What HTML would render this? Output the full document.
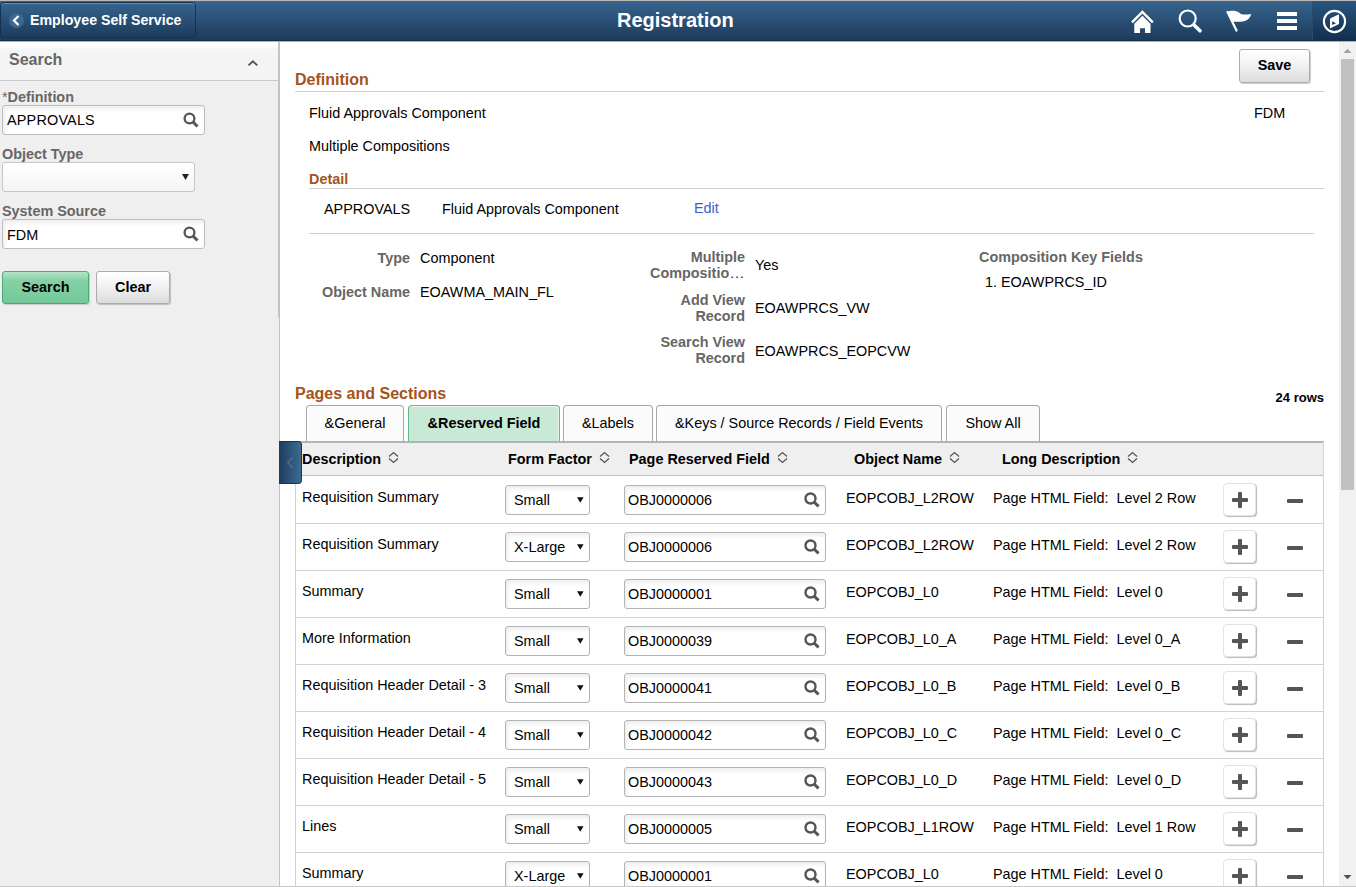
<!DOCTYPE html>
<html><head><meta charset="utf-8">
<style>
*{box-sizing:border-box;margin:0;padding:0}
html,body{width:1356px;height:887px;overflow:hidden;background:#fff;font-family:"Liberation Sans",sans-serif;color:#000}
.a{position:absolute;white-space:pre}
#topline{position:absolute;left:0;top:0;width:1356px;height:1px;background:#bcbab8}
#hdr{position:absolute;left:0;top:1px;width:1356px;height:40px;background:linear-gradient(#37658f,#1c3a5a)}
#hdrline{position:absolute;left:0;top:41px;width:1356px;height:1px;background:#8fb8e6}
#back{position:absolute;left:0;top:2px;width:196px;height:36px;border:1px solid #14324f;border-radius:4px;background:linear-gradient(#36648e,#1d3c5c);box-shadow:inset 0 1px 0 #5f8fbd}
#backc{position:absolute;left:9px;top:13px;width:15px;height:15px;border-radius:50%;background:#3b6992}
.ttl{color:#fff;font-weight:bold}
#left{position:absolute;left:0;top:42px;width:279px;height:844px;background:#efefef}
#lborder{position:absolute;left:279px;top:42px;width:1px;height:844px;background:#c3c3c3}
#lborder2{position:absolute;left:278px;top:42px;width:1px;height:276px;background:#c3c3c3}
#shdr{position:absolute;left:0;top:42px;width:278px;height:39px;background:linear-gradient(#fff 0,#fff 3px,#f4f4f4 8px,#f4f4f4);border-bottom:1px solid #c8c8c8}
.lbl{color:#666;font-weight:bold;font-size:14.4px}
.inp{position:absolute;background:#fff;border:1px solid #bdbdbd;border-radius:3px;box-shadow:inset 2px 3px 4px rgba(0,0,0,.07)}
.sel{position:absolute;background:linear-gradient(#fff,#f4f4f4);border:1px solid #c6c6c6;border-radius:3px}
#bottomline{position:absolute;left:0;top:886px;width:1356px;height:1px;background:#c8c8c8}
#sb{position:absolute;left:1339px;top:42px;width:17px;height:844px;background:#f1f1f1}
#thumb{position:absolute;left:1341px;top:59px;width:13px;height:431px;background:#c1c1c1}
.brown{color:#a4531b;font-weight:bold}
.r{text-align:right}
.t{font-size:14.4px;color:#000}
.btn{position:absolute;border-radius:3px;font-weight:bold;font-size:14.4px;text-align:center;line-height:31px;color:#000}
.green{background:linear-gradient(#b4e3c8 0,#84d0a4 9px,#74c99a 100%);border:1px solid #4aa872;box-shadow:1px 1px 1px rgba(0,0,0,.15)}
.gray{background:linear-gradient(#fff 0,#f4f4f4 40%,#dcdcdc 100%);border:1px solid #ababab;box-shadow:1px 1px 1px rgba(0,0,0,.2)}
.tab{position:absolute;top:405px;height:36px;border:1px solid #a6a6a6;border-bottom:none;border-radius:4px 4px 0 0;background:#fbfbfb;box-shadow:inset 1px 1px 0 #fff;text-align:center;font-size:14.4px;line-height:34px;white-space:pre}
.tab.act{background:#c8e9d6;border-color:#5fb988;font-weight:bold;box-shadow:inset -1px 1px 0 #eaf6ef}
.hd{font-weight:bold;font-size:14.4px;line-height:18px}
.rsel{position:absolute;left:505px;width:85px;height:30px;border:1px solid #b3b3b3;border-radius:3px;background:#fff;box-shadow:inset 2px 3px 4px rgba(0,0,0,.07)}
.rinp{position:absolute;left:624px;width:202px;height:30px;border:1px solid #b3b3b3;border-radius:3px;background:#fff;box-shadow:inset 2px 3px 4px rgba(0,0,0,.07)}
.plus{position:absolute;left:1223px;width:33px;height:33px;border:1px solid #e2e2e2;border-radius:4px;background:#fff;box-shadow:1px 1px 1px #b9b9b9}
.ph{position:absolute;left:8px;top:14px;width:16px;height:4px;background:#555;border-radius:1px}
.pv{position:absolute;left:14px;top:8px;width:4px;height:16px;background:#555;border-radius:1px}
</style></head><body>
<div id="topline"></div>
<div id="hdr"></div>
<div id="hdrline"></div>
<div class="a" style="left:0;top:40px;width:1356px;height:1px;background:#132f4d"></div>
<div id="back"></div>
<div id="backc"></div>
<div class="a ttl" style="left:30px;top:10px;font-size:14.2px;line-height:20px">Employee Self Service</div>
<div class="a ttl" style="left:617px;top:8px;font-size:20px;line-height:24px">Registration</div>

<div id="left"></div>
<div id="shdr"></div>
<div id="lborder"></div>
<div id="lborder2"></div>
<div class="a" style="left:9px;top:50px;font-size:16px;line-height:20px;color:#666;font-weight:bold">Search</div>


<div class="a" style="left:2px;top:88px;font-size:14.4px;line-height:18px;color:#666"><span style="font-weight:normal">*</span><b>Definition</b></div>
<div class="inp" style="left:2px;top:105px;width:203px;height:30px"></div>
<div class="a t" style="left:7px;top:111px;line-height:18px;color:#000;letter-spacing:0.2px">APPROVALS</div>
<svg class="a" style="left:180px;top:110px" width="22" height="20" viewBox="0 0 22 20"><circle cx="9.5" cy="8.5" r="4.9" fill="none" stroke="#555" stroke-width="2.3"/><path d="M13 12 L17.5 16.5" stroke="#555" stroke-width="3"/></svg>
<div class="a lbl" style="left:2px;top:145px;line-height:18px">Object Type</div>
<div class="sel" style="left:2px;top:162px;width:193px;height:30px"></div>
<svg class="a" style="left:181px;top:172px" width="9" height="9" viewBox="0 0 9 9"><path d="M1 2 L8 2 L4.5 8 Z" fill="#222"/></svg>
<div class="a lbl" style="left:2px;top:202px;line-height:18px">System Source</div>
<div class="inp" style="left:2px;top:219px;width:203px;height:30px"></div>
<div class="a t" style="left:7px;top:226px;line-height:18px;color:#000">FDM</div>
<svg class="a" style="left:180px;top:224px" width="22" height="20" viewBox="0 0 22 20"><circle cx="9.5" cy="8.5" r="4.9" fill="none" stroke="#555" stroke-width="2.3"/><path d="M13 12 L17.5 16.5" stroke="#555" stroke-width="3"/></svg>
<div class="btn green" style="left:2px;top:271px;width:87px;height:33px">Search</div>
<div class="btn gray" style="left:96px;top:271px;width:74px;height:33px">Clear</div>
<svg class="a" style="left:246px;top:58px" width="14" height="10" viewBox="0 0 14 10"><path d="M2.5 7.4 L6.9 3.3 L11.3 7.4" fill="none" stroke="#555" stroke-width="1.9"/></svg>


<div class="a brown" style="left:295px;top:70px;font-size:16px;line-height:20px">Definition</div>
<div class="a" style="left:295px;top:91px;width:1029px;height:1px;background:#cfcfcf"></div>
<div class="a t" style="left:309px;top:104px;line-height:18px">Fluid Approvals Component</div>
<div class="a t" style="left:1254px;top:104px;line-height:18px">FDM</div>
<div class="a t" style="left:309px;top:137px;line-height:18px">Multiple Compositions</div>
<div class="a brown" style="left:309px;top:170px;font-size:14.4px;line-height:18px">Detail</div>
<div class="a" style="left:309px;top:188px;width:1015px;height:1px;background:#cfcfcf"></div>
<div class="a t" style="left:324px;top:200px;line-height:18px">APPROVALS</div>
<div class="a t" style="left:442px;top:200px;line-height:18px">Fluid Approvals Component</div>
<div class="a t" style="left:694px;top:199px;line-height:18px;color:#3b5fcc">Edit</div>
<div class="a" style="left:309px;top:233px;width:1005px;height:1px;background:#cfcfcf"></div>

<div class="a lbl r" style="right:946px;top:249px;line-height:18px">Type</div>
<div class="a t" style="left:420px;top:249px;line-height:18px">Component</div>
<div class="a lbl r" style="right:946px;top:283px;line-height:18px">Object Name</div>
<div class="a t" style="left:420px;top:283px;line-height:18px">EOAWMA_MAIN_FL</div>

<div class="a lbl r" style="right:611px;top:249px;line-height:16px">Multiple
Compositio<span style="font-weight:normal;color:#2a3550;font-size:15.5px;letter-spacing:0.3px">…</span></div>
<div class="a t" style="left:755px;top:256px;line-height:18px">Yes</div>
<div class="a lbl r" style="right:611px;top:292px;line-height:16px">Add View
Record</div>
<div class="a t" style="left:755px;top:299px;line-height:18px">EOAWPRCS_VW</div>
<div class="a lbl r" style="right:611px;top:334px;line-height:16px">Search View
Record</div>
<div class="a t" style="left:755px;top:342px;line-height:18px">EOAWPRCS_EOPCVW</div>

<div class="a lbl" style="left:979px;top:248px;line-height:18px">Composition Key Fields</div>
<div class="a t" style="left:985px;top:273px;line-height:18px">1. EOAWPRCS_ID</div>

<div class="a brown" style="left:295px;top:384px;font-size:16px;line-height:20px">Pages and Sections</div>
<div class="a" style="right:32px;top:390px;font-size:13px;line-height:16px;font-weight:bold;color:#000">24 rows</div>

<div class="tab" style="left:306px;width:98px">&amp;General</div>
<div class="tab act" style="left:408px;width:152px">&amp;Reserved Field</div>
<div class="tab" style="left:563px;width:90px">&amp;Labels</div>
<div class="tab" style="left:656px;width:286px">&amp;Keys / Source Records / Field Events</div>
<div class="tab" style="left:946px;width:94px">Show All</div>
<div class="a" style="left:295px;top:441px;width:1029px;height:2px;background:#b3b3b3"></div>
<div class="a" style="left:295px;top:443px;width:1029px;height:32px;background:#efefef"></div>
<div class="a" style="left:295px;top:475px;width:1029px;height:1px;background:#bdbdbd"></div>
<div class="a" style="left:295px;top:441px;width:1px;height:445px;background:#d2d2d2"></div>
<div class="a" style="left:1323px;top:441px;width:1px;height:445px;background:#d2d2d2"></div>
<div class="a hd" style="left:302px;top:450px">Description</div>
<svg class="a" style="left:388px;top:451px" width="11" height="13" viewBox="0 0 11 13"><path d="M1 5.5 L5.5 1.5 L10 5.5 M1 7.5 L5.5 11.5 L10 7.5" fill="none" stroke="#555" stroke-width="1.3"/></svg>
<div class="a hd" style="left:508px;top:450px">Form Factor</div>
<svg class="a" style="left:599px;top:451px" width="11" height="13" viewBox="0 0 11 13"><path d="M1 5.5 L5.5 1.5 L10 5.5 M1 7.5 L5.5 11.5 L10 7.5" fill="none" stroke="#555" stroke-width="1.3"/></svg>
<div class="a hd" style="left:629px;top:450px">Page Reserved Field</div>
<svg class="a" style="left:777px;top:451px" width="11" height="13" viewBox="0 0 11 13"><path d="M1 5.5 L5.5 1.5 L10 5.5 M1 7.5 L5.5 11.5 L10 7.5" fill="none" stroke="#555" stroke-width="1.3"/></svg>
<div class="a hd" style="left:854px;top:450px">Object Name</div>
<svg class="a" style="left:949px;top:451px" width="11" height="13" viewBox="0 0 11 13"><path d="M1 5.5 L5.5 1.5 L10 5.5 M1 7.5 L5.5 11.5 L10 7.5" fill="none" stroke="#555" stroke-width="1.3"/></svg>
<div class="a hd" style="left:1002px;top:450px">Long Description</div>
<svg class="a" style="left:1127px;top:451px" width="11" height="13" viewBox="0 0 11 13"><path d="M1 5.5 L5.5 1.5 L10 5.5 M1 7.5 L5.5 11.5 L10 7.5" fill="none" stroke="#555" stroke-width="1.3"/></svg>
<div class="a" style="left:296px;top:523px;width:1027px;height:1px;background:#d2d2d2"></div>
<div class="a t" style="left:302px;top:488px;line-height:18px">Requisition Summary</div>
<div class="rsel" style="top:485px"></div>
<div class="a t" style="left:514px;top:491px;line-height:18px">Small</div>
<svg class="a" style="left:577px;top:497px" width="7" height="6" viewBox="0 0 7 6"><path d="M0 0.3 L6.6 0.3 L3.3 5.8 Z" fill="#111"/></svg>
<div class="rinp" style="top:485px"></div>
<div class="a t" style="left:628px;top:491px;line-height:18px">OBJ0000006</div>
<svg class="a" style="left:804px;top:492px" width="16" height="16" viewBox="0 0 16 16"><circle cx="6.5" cy="6.5" r="5" fill="none" stroke="#555" stroke-width="2.4"/><path d="M10 10 L14.6 14.4" stroke="#555" stroke-width="3"/></svg>
<div class="a t" style="left:846px;top:489px;line-height:18px">EOPCOBJ_L2ROW</div>
<div class="a t" style="left:993px;top:489px;line-height:18px">Page HTML Field:  Level 2 Row</div>
<div class="plus" style="top:483px"><div class="ph"></div><div class="pv"></div></div>
<div class="a" style="left:1287px;top:499px;width:16px;height:4px;background:#555;border-radius:1px"></div>
<div class="a" style="left:296px;top:570px;width:1027px;height:1px;background:#d2d2d2"></div>
<div class="a t" style="left:302px;top:535px;line-height:18px">Requisition Summary</div>
<div class="rsel" style="top:532px"></div>
<div class="a t" style="left:514px;top:538px;line-height:18px">X-Large</div>
<svg class="a" style="left:577px;top:544px" width="7" height="6" viewBox="0 0 7 6"><path d="M0 0.3 L6.6 0.3 L3.3 5.8 Z" fill="#111"/></svg>
<div class="rinp" style="top:532px"></div>
<div class="a t" style="left:628px;top:538px;line-height:18px">OBJ0000006</div>
<svg class="a" style="left:804px;top:539px" width="16" height="16" viewBox="0 0 16 16"><circle cx="6.5" cy="6.5" r="5" fill="none" stroke="#555" stroke-width="2.4"/><path d="M10 10 L14.6 14.4" stroke="#555" stroke-width="3"/></svg>
<div class="a t" style="left:846px;top:536px;line-height:18px">EOPCOBJ_L2ROW</div>
<div class="a t" style="left:993px;top:536px;line-height:18px">Page HTML Field:  Level 2 Row</div>
<div class="plus" style="top:530px"><div class="ph"></div><div class="pv"></div></div>
<div class="a" style="left:1287px;top:546px;width:16px;height:4px;background:#555;border-radius:1px"></div>
<div class="a" style="left:296px;top:617px;width:1027px;height:1px;background:#d2d2d2"></div>
<div class="a t" style="left:302px;top:582px;line-height:18px">Summary</div>
<div class="rsel" style="top:579px"></div>
<div class="a t" style="left:514px;top:585px;line-height:18px">Small</div>
<svg class="a" style="left:577px;top:591px" width="7" height="6" viewBox="0 0 7 6"><path d="M0 0.3 L6.6 0.3 L3.3 5.8 Z" fill="#111"/></svg>
<div class="rinp" style="top:579px"></div>
<div class="a t" style="left:628px;top:585px;line-height:18px">OBJ0000001</div>
<svg class="a" style="left:804px;top:586px" width="16" height="16" viewBox="0 0 16 16"><circle cx="6.5" cy="6.5" r="5" fill="none" stroke="#555" stroke-width="2.4"/><path d="M10 10 L14.6 14.4" stroke="#555" stroke-width="3"/></svg>
<div class="a t" style="left:846px;top:583px;line-height:18px">EOPCOBJ_L0</div>
<div class="a t" style="left:993px;top:583px;line-height:18px">Page HTML Field:  Level 0</div>
<div class="plus" style="top:577px"><div class="ph"></div><div class="pv"></div></div>
<div class="a" style="left:1287px;top:593px;width:16px;height:4px;background:#555;border-radius:1px"></div>
<div class="a" style="left:296px;top:664px;width:1027px;height:1px;background:#d2d2d2"></div>
<div class="a t" style="left:302px;top:629px;line-height:18px">More Information</div>
<div class="rsel" style="top:626px"></div>
<div class="a t" style="left:514px;top:632px;line-height:18px">Small</div>
<svg class="a" style="left:577px;top:638px" width="7" height="6" viewBox="0 0 7 6"><path d="M0 0.3 L6.6 0.3 L3.3 5.8 Z" fill="#111"/></svg>
<div class="rinp" style="top:626px"></div>
<div class="a t" style="left:628px;top:632px;line-height:18px">OBJ0000039</div>
<svg class="a" style="left:804px;top:633px" width="16" height="16" viewBox="0 0 16 16"><circle cx="6.5" cy="6.5" r="5" fill="none" stroke="#555" stroke-width="2.4"/><path d="M10 10 L14.6 14.4" stroke="#555" stroke-width="3"/></svg>
<div class="a t" style="left:846px;top:630px;line-height:18px">EOPCOBJ_L0_A</div>
<div class="a t" style="left:993px;top:630px;line-height:18px">Page HTML Field:  Level 0_A</div>
<div class="plus" style="top:624px"><div class="ph"></div><div class="pv"></div></div>
<div class="a" style="left:1287px;top:640px;width:16px;height:4px;background:#555;border-radius:1px"></div>
<div class="a" style="left:296px;top:711px;width:1027px;height:1px;background:#d2d2d2"></div>
<div class="a t" style="left:302px;top:676px;line-height:18px">Requisition Header Detail - 3</div>
<div class="rsel" style="top:673px"></div>
<div class="a t" style="left:514px;top:679px;line-height:18px">Small</div>
<svg class="a" style="left:577px;top:685px" width="7" height="6" viewBox="0 0 7 6"><path d="M0 0.3 L6.6 0.3 L3.3 5.8 Z" fill="#111"/></svg>
<div class="rinp" style="top:673px"></div>
<div class="a t" style="left:628px;top:679px;line-height:18px">OBJ0000041</div>
<svg class="a" style="left:804px;top:680px" width="16" height="16" viewBox="0 0 16 16"><circle cx="6.5" cy="6.5" r="5" fill="none" stroke="#555" stroke-width="2.4"/><path d="M10 10 L14.6 14.4" stroke="#555" stroke-width="3"/></svg>
<div class="a t" style="left:846px;top:677px;line-height:18px">EOPCOBJ_L0_B</div>
<div class="a t" style="left:993px;top:677px;line-height:18px">Page HTML Field:  Level 0_B</div>
<div class="plus" style="top:671px"><div class="ph"></div><div class="pv"></div></div>
<div class="a" style="left:1287px;top:687px;width:16px;height:4px;background:#555;border-radius:1px"></div>
<div class="a" style="left:296px;top:758px;width:1027px;height:1px;background:#d2d2d2"></div>
<div class="a t" style="left:302px;top:723px;line-height:18px">Requisition Header Detail - 4</div>
<div class="rsel" style="top:720px"></div>
<div class="a t" style="left:514px;top:726px;line-height:18px">Small</div>
<svg class="a" style="left:577px;top:732px" width="7" height="6" viewBox="0 0 7 6"><path d="M0 0.3 L6.6 0.3 L3.3 5.8 Z" fill="#111"/></svg>
<div class="rinp" style="top:720px"></div>
<div class="a t" style="left:628px;top:726px;line-height:18px">OBJ0000042</div>
<svg class="a" style="left:804px;top:727px" width="16" height="16" viewBox="0 0 16 16"><circle cx="6.5" cy="6.5" r="5" fill="none" stroke="#555" stroke-width="2.4"/><path d="M10 10 L14.6 14.4" stroke="#555" stroke-width="3"/></svg>
<div class="a t" style="left:846px;top:724px;line-height:18px">EOPCOBJ_L0_C</div>
<div class="a t" style="left:993px;top:724px;line-height:18px">Page HTML Field:  Level 0_C</div>
<div class="plus" style="top:718px"><div class="ph"></div><div class="pv"></div></div>
<div class="a" style="left:1287px;top:734px;width:16px;height:4px;background:#555;border-radius:1px"></div>
<div class="a" style="left:296px;top:805px;width:1027px;height:1px;background:#d2d2d2"></div>
<div class="a t" style="left:302px;top:770px;line-height:18px">Requisition Header Detail - 5</div>
<div class="rsel" style="top:767px"></div>
<div class="a t" style="left:514px;top:773px;line-height:18px">Small</div>
<svg class="a" style="left:577px;top:779px" width="7" height="6" viewBox="0 0 7 6"><path d="M0 0.3 L6.6 0.3 L3.3 5.8 Z" fill="#111"/></svg>
<div class="rinp" style="top:767px"></div>
<div class="a t" style="left:628px;top:773px;line-height:18px">OBJ0000043</div>
<svg class="a" style="left:804px;top:774px" width="16" height="16" viewBox="0 0 16 16"><circle cx="6.5" cy="6.5" r="5" fill="none" stroke="#555" stroke-width="2.4"/><path d="M10 10 L14.6 14.4" stroke="#555" stroke-width="3"/></svg>
<div class="a t" style="left:846px;top:771px;line-height:18px">EOPCOBJ_L0_D</div>
<div class="a t" style="left:993px;top:771px;line-height:18px">Page HTML Field:  Level 0_D</div>
<div class="plus" style="top:765px"><div class="ph"></div><div class="pv"></div></div>
<div class="a" style="left:1287px;top:781px;width:16px;height:4px;background:#555;border-radius:1px"></div>
<div class="a" style="left:296px;top:852px;width:1027px;height:1px;background:#d2d2d2"></div>
<div class="a t" style="left:302px;top:817px;line-height:18px">Lines</div>
<div class="rsel" style="top:814px"></div>
<div class="a t" style="left:514px;top:820px;line-height:18px">Small</div>
<svg class="a" style="left:577px;top:826px" width="7" height="6" viewBox="0 0 7 6"><path d="M0 0.3 L6.6 0.3 L3.3 5.8 Z" fill="#111"/></svg>
<div class="rinp" style="top:814px"></div>
<div class="a t" style="left:628px;top:820px;line-height:18px">OBJ0000005</div>
<svg class="a" style="left:804px;top:821px" width="16" height="16" viewBox="0 0 16 16"><circle cx="6.5" cy="6.5" r="5" fill="none" stroke="#555" stroke-width="2.4"/><path d="M10 10 L14.6 14.4" stroke="#555" stroke-width="3"/></svg>
<div class="a t" style="left:846px;top:818px;line-height:18px">EOPCOBJ_L1ROW</div>
<div class="a t" style="left:993px;top:818px;line-height:18px">Page HTML Field:  Level 1 Row</div>
<div class="plus" style="top:812px"><div class="ph"></div><div class="pv"></div></div>
<div class="a" style="left:1287px;top:828px;width:16px;height:4px;background:#555;border-radius:1px"></div>
<div class="a" style="left:296px;top:899px;width:1027px;height:1px;background:#d2d2d2"></div>
<div class="a t" style="left:302px;top:864px;line-height:18px">Summary</div>
<div class="rsel" style="top:861px"></div>
<div class="a t" style="left:514px;top:867px;line-height:18px">X-Large</div>
<svg class="a" style="left:577px;top:873px" width="7" height="6" viewBox="0 0 7 6"><path d="M0 0.3 L6.6 0.3 L3.3 5.8 Z" fill="#111"/></svg>
<div class="rinp" style="top:861px"></div>
<div class="a t" style="left:628px;top:867px;line-height:18px">OBJ0000001</div>
<svg class="a" style="left:804px;top:868px" width="16" height="16" viewBox="0 0 16 16"><circle cx="6.5" cy="6.5" r="5" fill="none" stroke="#555" stroke-width="2.4"/><path d="M10 10 L14.6 14.4" stroke="#555" stroke-width="3"/></svg>
<div class="a t" style="left:846px;top:865px;line-height:18px">EOPCOBJ_L0</div>
<div class="a t" style="left:993px;top:865px;line-height:18px">Page HTML Field:  Level 0</div>
<div class="plus" style="top:859px"><div class="ph"></div><div class="pv"></div></div>
<div class="a" style="left:1287px;top:875px;width:16px;height:4px;background:#555;border-radius:1px"></div>
<div class="a" style="left:279px;top:441px;width:23px;height:43px;background:linear-gradient(90deg,#1c3d5f,#3d6b93);border:1px solid #183553;border-left:none;border-radius:0 4px 4px 0"></div>
<svg class="a" style="left:285px;top:455px" width="10" height="15" viewBox="0 0 10 15"><path d="M7.8 2.2 L2.8 7.6 L7.8 13" fill="none" stroke="#5d6d7c" stroke-width="1.3"/></svg>
<div id="sb"></div>
<div id="thumb"></div>

<svg class="a" style="left:9px;top:13px" width="15" height="15" viewBox="0 0 15 15"><path d="M9.5 3 L5 7.5 L9.5 12" fill="none" stroke="#fff" stroke-width="2.2"/></svg>
<svg class="a" style="left:1128px;top:6px" width="30" height="30" viewBox="0 0 30 30"><path d="M4 16.3 L14.4 5.9 L24.8 16.3" fill="none" stroke="#fff" stroke-width="2.4"/><path d="M6.3 17.8 L14.4 9.7 L22.5 17.8 L22.5 26.9 L17 26.9 L17 22.2 L12 22.2 L12 26.9 L6.3 26.9 Z" fill="#fff"/></svg>
<svg class="a" style="left:1175px;top:6px" width="30" height="30" viewBox="0 0 30 30"><circle cx="12.7" cy="12.5" r="8" fill="none" stroke="#fff" stroke-width="2.2"/><path d="M19 19 L25 24.8" stroke="#fff" stroke-width="3.6" stroke-linecap="round"/></svg>
<svg class="a" style="left:1223px;top:6px" width="30" height="30" viewBox="0 0 30 30"><path d="M4.5 6 L13.5 24.5" stroke="#fff" stroke-width="2.2" stroke-linecap="round"/><path d="M4.2 5.7 C8 4.4 13 4.6 16 6.5 C18.5 9 22 9 28.2 8 C27 12.5 24 15 19.5 15.6 C15.5 16.2 13.5 15.4 9.5 16 Z" fill="#fff"/></svg>
<div class="a" style="left:1277px;top:12px;width:20px;height:4px;background:#fff"></div>
<div class="a" style="left:1277px;top:19px;width:20px;height:4px;background:#fff"></div>
<div class="a" style="left:1277px;top:26px;width:20px;height:4px;background:#fff"></div>
<div class="a" style="left:1313px;top:1px;width:43px;height:40px;background:linear-gradient(#285682,#132e4b)"></div>
<div class="a" style="left:1312px;top:2px;width:1px;height:38px;background:#2c4a6a"></div>
<svg class="a" style="left:1320px;top:7px" width="29" height="29" viewBox="0 0 29 29"><circle cx="14.5" cy="14.5" r="10.6" fill="none" stroke="#fff" stroke-width="2.1"/><path d="M10 11.5 L19 7.2 L19 17.1 L10 21.4 Z" fill="#fff"/><path d="M12.2 14.3 L16 16.2 L12.2 17.9 Z" fill="#1e3e5e"/></svg>
<div class="btn gray" style="left:1239px;top:49px;width:71px;height:34px;line-height:30px">Save</div>
<svg class="a" style="left:1339px;top:42px" width="17" height="17" viewBox="0 0 17 17"><path d="M4.5 11 L8.5 6.8 L12.5 11 Z" fill="#a3a3a3"/></svg>
<svg class="a" style="left:1339px;top:869px" width="17" height="17" viewBox="0 0 17 17"><path d="M4.5 6 L8.5 10.2 L12.5 6 Z" fill="#505050"/></svg>

<div id="bottomline"></div>
</body></html>
